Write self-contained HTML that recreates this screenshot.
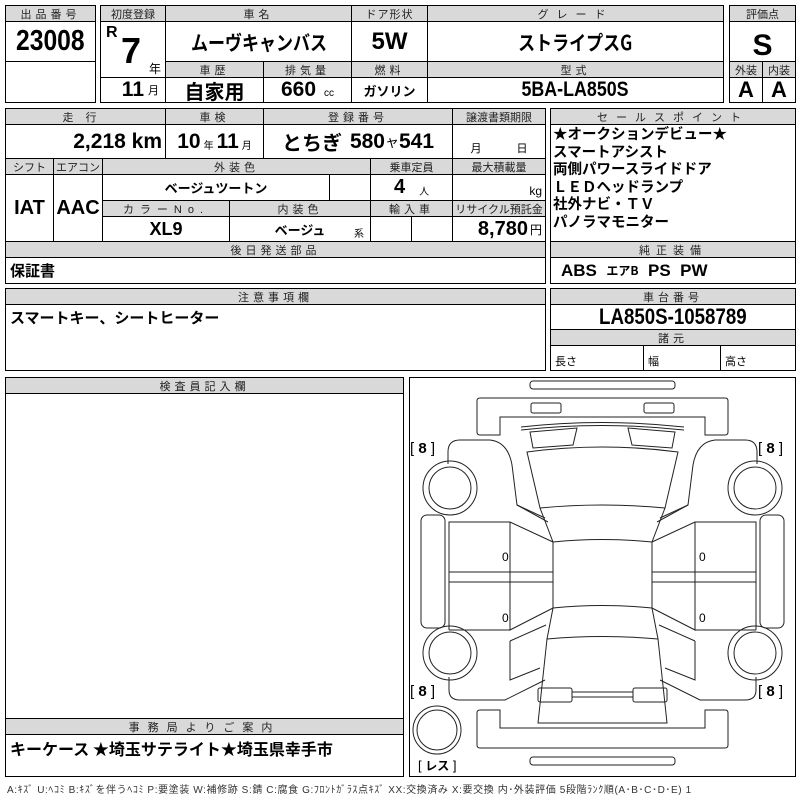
<!DOCTYPE html>
<html><head><meta charset="utf-8"><style>
*{margin:0;padding:0;box-sizing:border-box}
body{width:800px;height:800px;background:#fff;position:relative;overflow:hidden;font-family:"Liberation Sans","Noto Sans CJK JP",sans-serif;color:#000}
.c{position:absolute;border:1px solid #000;display:flex;align-items:center;justify-content:center;white-space:nowrap;overflow:hidden}
.h{background:#d9d9d9;font-size:11px;letter-spacing:4px;color:#222;font-weight:normal}
.v{font-family:"Liberation Sans Narrow","Liberation Sans","Noto Sans CJK JP",sans-serif;font-weight:bold}
.s{font-size:10px;font-weight:normal;font-family:"Liberation Sans","Noto Sans CJK JP",sans-serif}
.j{font-family:"Noto Sans CJK JP",sans-serif;font-weight:bold}
.n{display:inline-block;transform:scaleX(.85)}
</style></head><body>
<!-- box1 -->
<div class="c h" style="left:5px;top:5px;width:91px;height:17px">出品番号</div>
<div class="c v" style="left:5px;top:21px;width:91px;height:41px;font-size:29px"><span class="n">23008</span></div>
<div class="c" style="left:5px;top:61px;width:91px;height:42px"></div>
<!-- box2 -->
<div class="c h" style="left:100px;top:5px;width:66px;height:17px;letter-spacing:0">初度登録</div>
<div class="c h" style="left:165px;top:5px;width:187px;height:17px">車名</div>
<div class="c h" style="left:351px;top:5px;width:77px;height:17px;letter-spacing:1px">ドア形状</div>
<div class="c h" style="left:427px;top:5px;width:297px;height:17px;letter-spacing:8px">グレード</div>
<div class="c" style="left:100px;top:21px;width:66px;height:57px"></div>
<div class="v" style="position:absolute;left:106px;top:24px;font-size:16px">R</div>
<div class="v" style="position:absolute;left:121px;top:30px;font-size:36px">7</div>
<div class="s" style="position:absolute;left:149px;top:60px;font-size:12px">年</div>
<div class="c v" style="left:100px;top:77px;width:66px;height:26px;font-size:21px;justify-content:flex-end;padding-right:6px">11<span class="s" style="margin-left:4px;font-size:11px">月</span></div>
<div class="c j" style="left:165px;top:21px;width:187px;height:41px;font-size:20px"><span class="n">ムーヴキャンバス</span></div>
<div class="c v" style="left:351px;top:21px;width:77px;height:41px;font-size:24px">5W</div>
<div class="c j" style="left:427px;top:21px;width:297px;height:41px;font-size:20px"><span class="n">ストライプスG</span></div>
<div class="c h" style="left:165px;top:61px;width:99px;height:17px">車歴</div>
<div class="c h" style="left:263px;top:61px;width:89px;height:17px">排気量</div>
<div class="c h" style="left:351px;top:61px;width:77px;height:17px">燃料</div>
<div class="c h" style="left:427px;top:61px;width:297px;height:17px">型式</div>
<div class="c j" style="left:165px;top:77px;width:99px;height:26px;font-size:20px">自家用</div>
<div class="c v" style="left:263px;top:77px;width:89px;height:26px;font-size:21px">660<span class="s" style="margin-left:8px;margin-top:6px">cc</span></div>
<div class="c j" style="left:351px;top:77px;width:77px;height:26px;font-size:13px">ガソリン</div>
<div class="c v" style="left:427px;top:77px;width:297px;height:26px;font-size:21px"><span class="n">5BA-LA850S</span></div>
<!-- box3 -->
<div class="c h" style="left:729px;top:5px;width:67px;height:17px;letter-spacing:0">評価点</div>
<div class="c v" style="left:729px;top:21px;width:67px;height:41px;font-size:30px;padding-top:8px">S</div>
<div class="c h" style="left:729px;top:61px;width:34px;height:17px;letter-spacing:0">外装</div>
<div class="c h" style="left:762px;top:61px;width:34px;height:17px;letter-spacing:0">内装</div>
<div class="c v" style="left:729px;top:77px;width:34px;height:26px;font-size:22px">A</div>
<div class="c v" style="left:762px;top:77px;width:34px;height:26px;font-size:22px">A</div>
<!-- box4 -->
<div class="c h" style="left:5px;top:108px;width:161px;height:17px;letter-spacing:12px">走行</div>
<div class="c h" style="left:165px;top:108px;width:99px;height:17px">車検</div>
<div class="c h" style="left:263px;top:108px;width:190px;height:17px">登録番号</div>
<div class="c h" style="left:452px;top:108px;width:94px;height:17px;letter-spacing:0">譲渡書類期限</div>
<div class="c v" style="left:5px;top:124px;width:161px;height:35px;font-size:21px;justify-content:flex-end;padding-right:3px">2,218 km</div>
<div class="c v" style="left:165px;top:124px;width:99px;height:35px;font-size:21px">10<span class="s" style="margin:6px 3px 0">年</span>11<span class="s" style="margin:6px 0 0 3px">月</span></div>
<div class="c v" style="left:263px;top:124px;width:190px;height:35px;font-size:21px"><span class="j" style="font-size:20px;margin-right:8px">とちぎ</span>580<span class="s" style="font-size:14px">ャ</span>541</div>
<div class="c s" style="left:452px;top:124px;width:94px;height:35px;font-size:11px;padding-top:12px;justify-content:space-around">月<span>日</span></div>
<div class="c h" style="left:5px;top:158px;width:49px;height:17px;letter-spacing:0">シフト</div>
<div class="c h" style="left:53px;top:158px;width:50px;height:17px;letter-spacing:0">エアコン</div>
<div class="c h" style="left:102px;top:158px;width:269px;height:17px">外装色</div>
<div class="c h" style="left:370px;top:158px;width:83px;height:17px;letter-spacing:0">乗車定員</div>
<div class="c h" style="left:452px;top:158px;width:94px;height:17px;letter-spacing:0">最大積載量</div>
<div class="c v" style="left:5px;top:174px;width:49px;height:68px;font-size:20px">IAT</div>
<div class="c v" style="left:53px;top:174px;width:50px;height:68px;font-size:20px">AAC</div>
<div class="c j" style="left:102px;top:174px;width:228px;height:27px;font-size:13px">ベージュツートン</div>
<div class="c" style="left:329px;top:174px;width:42px;height:27px"></div>
<div class="c v" style="left:370px;top:174px;width:83px;height:27px;font-size:20px">4<span class="s" style="margin:6px 0 0 14px">人</span></div>
<div class="c s" style="left:452px;top:174px;width:94px;height:27px;font-size:12px;justify-content:flex-end;padding:6px 3px 0 0">kg</div>
<div class="c h" style="left:102px;top:200px;width:128px;height:17px;letter-spacing:6px">カラーNo.</div>
<div class="c h" style="left:229px;top:200px;width:142px;height:17px">内装色</div>
<div class="c h" style="left:370px;top:200px;width:83px;height:17px">輸入車</div>
<div class="c h" style="left:452px;top:200px;width:94px;height:17px;letter-spacing:0">リサイクル預託金</div>
<div class="c v" style="left:102px;top:216px;width:128px;height:26px;font-size:18px">XL9</div>
<div class="c j" style="left:229px;top:216px;width:142px;height:26px;font-size:13px">ベージュ<span class="s" style="position:absolute;right:6px;top:8px">系</span></div>
<div class="c" style="left:370px;top:216px;width:42px;height:26px"></div>
<div class="c" style="left:411px;top:216px;width:42px;height:26px"></div>
<div class="c v" style="left:452px;top:216px;width:94px;height:26px;font-size:20px;justify-content:flex-end;padding-right:3px">8,780<span class="s" style="font-size:12px;margin-left:2px">円</span></div>
<div class="c h" style="left:5px;top:241px;width:541px;height:17px">後日発送部品</div>
<div class="c j" style="left:5px;top:257px;width:541px;height:27px;font-size:15px;justify-content:flex-start;padding-left:4px">保証書</div>
<!-- box5 -->
<div class="c h" style="left:550px;top:108px;width:246px;height:17px;letter-spacing:8px">セールスポイント</div>
<div class="c j" style="left:550px;top:124px;width:246px;height:118px;font-size:14.5px;line-height:17.5px;display:block;padding:0 0 0 2px;white-space:pre;font-weight:bold">★オークションデビュー★
スマートアシスト
両側パワースライドドア
ＬＥＤヘッドランプ
社外ナビ・ＴＶ
パノラマモニター</div>
<div class="c h" style="left:550px;top:241px;width:246px;height:17px;letter-spacing:6px">純正装備</div>
<div class="c v" style="left:550px;top:257px;width:246px;height:27px;font-size:17px;justify-content:flex-start;padding-left:10px">ABS&nbsp;&nbsp;<span class="j" style="font-size:12px">エアB</span>&nbsp;&nbsp;PS&nbsp;&nbsp;PW</div>
<!-- box6 -->
<div class="c h" style="left:5px;top:288px;width:541px;height:17px">注意事項欄</div>
<div class="c j" style="left:5px;top:304px;width:541px;height:67px;font-size:15px;align-items:flex-start;justify-content:flex-start;padding:2px 0 0 4px">スマートキー、シートヒーター</div>
<!-- box7 -->
<div class="c h" style="left:550px;top:288px;width:246px;height:17px">車台番号</div>
<div class="c v" style="left:550px;top:304px;width:246px;height:26px;font-size:22px"><span class="n">LA850S-1058789</span></div>
<div class="c h" style="left:550px;top:329px;width:246px;height:17px">諸元</div>
<div class="c s" style="left:550px;top:345px;width:94px;height:26px;justify-content:flex-start;padding:6px 0 0 4px;font-size:11px">長さ</div>
<div class="c s" style="left:643px;top:345px;width:78px;height:26px;justify-content:flex-start;padding:6px 0 0 4px;font-size:11px">幅</div>
<div class="c s" style="left:720px;top:345px;width:76px;height:26px;justify-content:flex-start;padding:6px 0 0 4px;font-size:11px">高さ</div>
<!-- box8 -->
<div class="c" style="left:5px;top:377px;width:399px;height:400px"></div>
<div class="c h" style="left:5px;top:377px;width:399px;height:17px">検査員記入欄</div>
<div class="c h" style="left:5px;top:718px;width:399px;height:17px;letter-spacing:8px">事務局よりご案内</div>
<div class="j" style="position:absolute;left:10px;top:736px;font-size:16px">キーケース ★埼玉サテライト★埼玉県幸手市</div>
<div class="s" style="position:absolute;left:7px;top:781px;font-size:10px;color:#333;letter-spacing:0.6px">A:ｷｽﾞ U:ﾍｺﾐ B:ｷｽﾞを伴うﾍｺﾐ P:要塗装 W:補修跡 S:錆 C:腐食 G:ﾌﾛﾝﾄｶﾞﾗｽ点ｷｽﾞ XX:交換済み X:要交換 内･外装評価 5段階ﾗﾝｸ順(A･B･C･D･E) 1</div>
<!-- car -->
<div class="c" style="left:409px;top:377px;width:387px;height:400px"></div>
<svg style="position:absolute;left:0;top:0" width="800" height="800" fill="none" stroke="#222" stroke-width="1">
<rect x="530" y="381" width="145" height="8" rx="3"/>
<rect x="530" y="757" width="145" height="8" rx="3"/>
<path d="M480 398 H725 Q728 398 728 401 V432 Q728 435 725 435 H705 V417 H500 V435 H480 Q477 435 477 432 V401 Q477 398 480 398Z"/>
<path d="M480 748 H725 Q728 748 728 745 V713 Q728 710 725 710 H705 V728 H500 V710 H480 Q477 710 477 713 V745 Q477 748 480 748Z"/>
<rect x="531" y="403" width="30" height="10" rx="2"/><rect x="644" y="403" width="30" height="10" rx="2"/>
<path d="M521 427 Q602 418 684 427 M521 430 Q602 421 684 430"/>
<path d="M530 432 L577 428 L573 445 L533 448Z M675 432 L628 428 L632 445 L672 448Z"/>
<path d="M527 452 Q602 442 678 452 L665 508 Q602 502 540 508Z"/>
<path d="M540 508 L553 542 Q602 537 652 542 L665 508"/>
<path d="M553 542 V608 Q602 603 652 608 V542"/>
<path d="M553 608 L547 639 Q602 634 658 639 L652 608"/>
<path d="M547 639 L538 723 H667 L658 639"/>
<rect x="538" y="688" width="34" height="14" rx="2"/><rect x="633" y="688" width="34" height="14" rx="2"/>
<path d="M572 692 H633 M572 697 H633"/>
<g id="L">
<path d="M448 464 V452 Q448 440 460 440 H490 Q508 442 512 465 L517 505 L548 522"/>
<path d="M517 505 L545 518"/>
<circle cx="450" cy="488" r="27"/><circle cx="450" cy="488" r="21"/>
<circle cx="450" cy="653" r="27"/><circle cx="450" cy="653" r="21"/>
<rect x="421" y="515" width="24" height="113" rx="6"/>
<path d="M449 630 V522 H510 L553 542 M449 572 H553 M449 582 H553 M510 522 V630 L553 608"/>
<path d="M449 630 H510"/>
<path d="M510 641 L546 625 M510 641 V680 L540 668 M449 677 V690 Q449 700 460 700 H505 L545 680"/>
</g>
<use href="#L" transform="translate(1205,0) scale(-1,1)"/>
<circle cx="437" cy="730" r="24"/><circle cx="437" cy="730" r="20"/>
</svg>
<div class="v" style="position:absolute;left:502px;top:550px;font-size:12px;font-weight:normal">0</div>
<div class="v" style="position:absolute;left:502px;top:611px;font-size:12px;font-weight:normal">0</div>
<div class="v" style="position:absolute;left:699px;top:550px;font-size:12px;font-weight:normal">0</div>
<div class="v" style="position:absolute;left:699px;top:611px;font-size:12px;font-weight:normal">0</div>
<div class="v" style="position:absolute;left:410px;top:440px;font-size:15px"><span style="font-weight:normal">[</span> 8 <span style="font-weight:normal">]</span></div>
<div class="v" style="position:absolute;left:758px;top:440px;font-size:15px"><span style="font-weight:normal">[</span> 8 <span style="font-weight:normal">]</span></div>
<div class="v" style="position:absolute;left:410px;top:683px;font-size:15px"><span style="font-weight:normal">[</span> 8 <span style="font-weight:normal">]</span></div>
<div class="v" style="position:absolute;left:758px;top:683px;font-size:15px"><span style="font-weight:normal">[</span> 8 <span style="font-weight:normal">]</span></div>
<div class="v" style="position:absolute;left:418px;top:757px;font-size:13px"><span style="font-weight:normal">[ </span><span class="j" style="font-size:12px">レス</span><span style="font-weight:normal"> ]</span></div>
</body></html>
